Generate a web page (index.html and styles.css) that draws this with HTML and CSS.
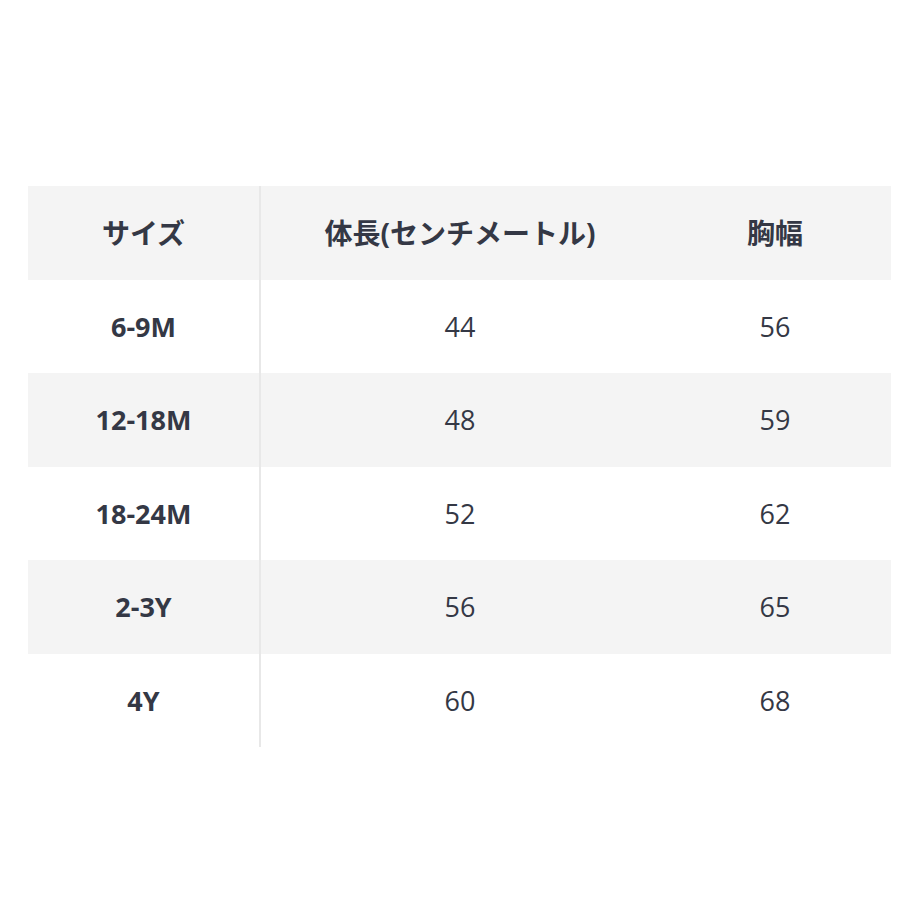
FILE: index.html
```html
<!DOCTYPE html>
<html lang="ja">
<head>
<meta charset="utf-8">
<link rel="stylesheet" href="styles.css">
</head>
<body>
<table class="size-table">
  <colgroup>
    <col class="col-size">
    <col class="col-length">
    <col class="col-chest">
  </colgroup>
  <thead>
    <tr><th class="first">サイズ</th><th>体長(センチメートル)</th><th>胸幅</th></tr>
  </thead>
  <tbody>
    <tr><th class="first">6-9M</th><td>44</td><td>56</td></tr>
    <tr class="alt"><th class="first">12-18M</th><td>48</td><td>59</td></tr>
    <tr><th class="first">18-24M</th><td>52</td><td>62</td></tr>
    <tr class="alt"><th class="first">2-3Y</th><td>56</td><td>65</td></tr>
    <tr><th class="first">4Y</th><td>60</td><td>68</td></tr>
  </tbody>
</table>
</body>
</html>
```
FILE: styles.css
```css
html, body {
  margin: 0;
  padding: 0;
  background: #ffffff;
}
body {
  padding-top: 186px;
  padding-left: 28px;
  font-family: "Open Sans", "Noto Sans CJK JP", sans-serif;
  color: #343845;
}
.size-table {
  border-collapse: collapse;
  width: 863px;
  table-layout: fixed;
}
.col-size { width: 232px; }
.col-length { width: 399px; }
.col-chest { width: 232px; }
.size-table th,
.size-table td {
  height: 93.5px;
  padding: 0;
  text-align: center;
  vertical-align: middle;
  font-size: 27px;
  line-height: 1;
}
.size-table thead th {
  font-size: 28px;
}
.size-table th {
  font-weight: 700;
}
.size-table td {
  font-weight: 400;
}
.size-table thead tr,
.size-table tr.alt {
  background: #f4f4f4;
}
.size-table .first {
  border-right: 2px solid #e8e8e8;
}
```
